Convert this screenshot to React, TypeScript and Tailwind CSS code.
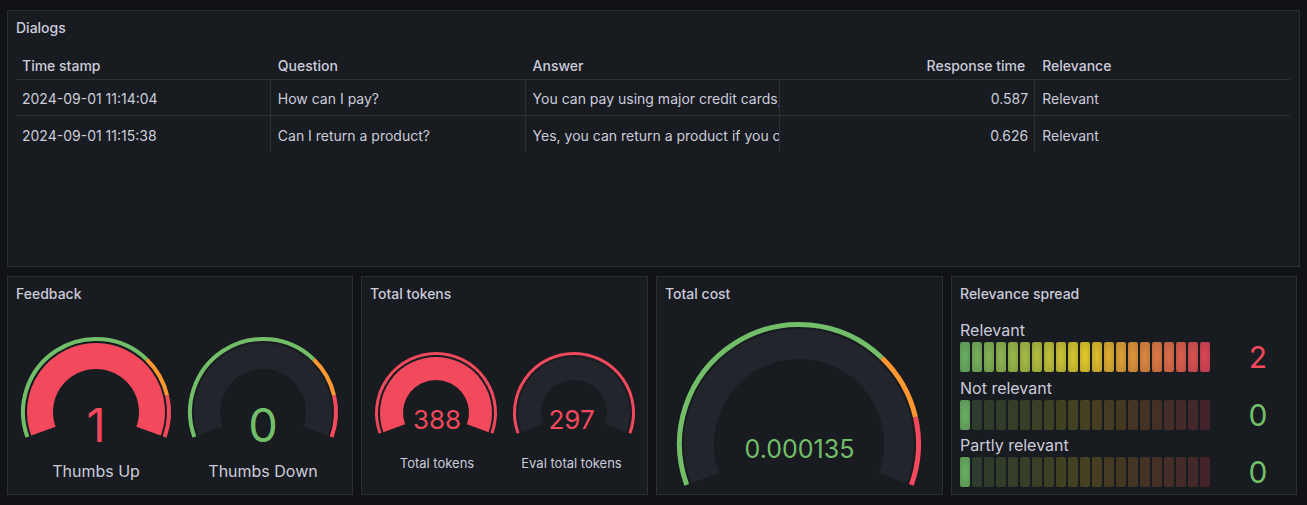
import React from 'react';

const GREEN = '#73bf69';
const ORANGE = '#ff9830';
const RED = '#f2495c';
const TRACK = '#22252b';

type Band = [number, number, string];

// thresholds as fractions of the gauge range
const trafficBands: Band[] = [
  [0, 0.7, GREEN],
  [0.7, 0.85, ORANGE],
  [0.85, 1, RED],
];
const redBands: Band[] = [[0, 1, RED]];

const START = 160;
const SWEEP = 220;

function arc(cx: number, cy: number, r: number, f0: number, f1: number) {
  const a0 = ((START + SWEEP * f0) * Math.PI) / 180;
  const a1 = ((START + SWEEP * f1) * Math.PI) / 180;
  const x0 = cx + r * Math.cos(a0);
  const y0 = cy + r * Math.sin(a0);
  const x1 = cx + r * Math.cos(a1);
  const y1 = cy + r * Math.sin(a1);
  const large = SWEEP * (f1 - f0) > 180 ? 1 : 0;
  return `M ${x0} ${y0} A ${r} ${r} 0 ${large} 1 ${x1} ${y1}`;
}

type GaugeProps = {
  box: string;
  width: number;
  height: number;
  cx: number;
  cy: number;
  r: number;
  band: number;
  gap: number;
  inner: number;
  fill: number;
  color: string;
  bands: Band[];
  value: string;
  valueClass: string;
};

function Gauge(p: GaugeProps) {
  const outer = p.r - p.band - p.gap;
  const mid = (outer + p.inner) / 2;
  const tw = outer - p.inner;
  return (
    <div className={`relative ${p.box}`}>
      <svg width={p.width} height={p.height} className="absolute left-0 top-0">
        {p.bands.map(([f0, f1, c]) => (
          <path key={f0} d={arc(p.cx, p.cy, p.r - p.band / 2, f0, f1)} stroke={c} strokeWidth={p.band} fill="none" />
        ))}
        <path d={arc(p.cx, p.cy, mid, 0, 1)} stroke={TRACK} strokeWidth={tw} fill="none" />
        {p.fill > 0 && (
          <path d={arc(p.cx, p.cy, mid, 0, p.fill)} stroke={p.color} strokeWidth={tw} fill="none" />
        )}
      </svg>
      <div className={`absolute inset-x-0 text-center leading-none ${p.valueClass}`}>{p.value}</div>
    </div>
  );
}

function Panel({ title, className, children }: { title: string; className: string; children?: React.ReactNode }) {
  return (
    <div className={`flex flex-col border border-[#2a2d32] bg-[#181b1f] ${className}`}>
      <div className="h-[32px] shrink-0 px-[8px] pt-[7px] text-[14px] font-medium leading-[20px] text-[#ccccdc]">
        {title}
      </div>
      {children}
    </div>
  );
}

const rows = [
  ['2024-09-01 11:14:04', 'How can I pay?', 'You can pay using major credit cards, debit cards and PayPal.', '0.587', 'Relevant'],
  ['2024-09-01 11:15:38', 'Can I return a product?', 'Yes, you can return a product if you contact us within 30 days.', '0.626', 'Relevant'],
];

function DialogsTable() {
  return (
    <div className="ml-[8px] mr-[9px] text-[14px] text-[#ccccdc]">
      <div className="grid h-[37px] grid-cols-5 border-b border-[#2c2f34] font-medium">
        <div className="pl-[6px] pt-[13px] leading-[20px]">Time stamp</div>
        <div className="pl-[7px] pt-[13px] leading-[20px]">Question</div>
        <div className="pl-[7px] pt-[13px] leading-[20px]">Answer</div>
        <div className="pr-[10px] pt-[13px] text-right leading-[20px]">Response time</div>
        <div className="pl-[7px] pt-[13px] leading-[20px]">Relevance</div>
      </div>
      {rows.map((r, i) => (
        <div key={r[0]} className={`grid h-[36px] grid-cols-5 ${i === 0 ? 'border-b border-[#2c2f34]' : ''}`}>
          <div className="flex items-center overflow-hidden whitespace-nowrap border-r border-[#2c2f34] pl-[6px] pt-[2px]">{r[0]}</div>
          <div className="flex items-center overflow-hidden whitespace-nowrap border-r border-[#2c2f34] pl-[7px] pt-[2px]">{r[1]}</div>
          <div className="flex items-center overflow-hidden whitespace-nowrap border-r border-[#2c2f34] pl-[7px] pt-[2px]">{r[2]}</div>
          <div className="flex items-center justify-end overflow-hidden whitespace-nowrap border-r border-[#2c2f34] pr-[6px] pt-[2px]">{r[3]}</div>
          <div className="flex items-center overflow-hidden whitespace-nowrap pl-[7px] pt-[2px]">{r[4]}</div>
        </div>
      ))}
    </div>
  );
}

// continuous green-yellow-red scheme
function grYlRd(t: number): number[] {
  const g = [115, 191, 105];
  const y = [250, 222, 42];
  const r = [242, 73, 92];
  const [a, b, k] = t < 0.5 ? [g, y, t * 2] : [y, r, (t - 0.5) * 2];
  return a.map((v, i) => Math.round(v + (b[i] - v) * k));
}

function LcdRow({ label, value, lit, valueClass }: { label: string; value: string; lit: number; valueClass: string }) {
  const cells = Array.from({ length: 21 }, (_, i) => i);
  return (
    <div className="flex items-end">
      <div className="w-[250px]">
        <div className="text-[16px] leading-[20px] text-[#ccccdc]">{label}</div>
        <div className="mt-[2px] flex h-[30px] gap-[2px]">
          {cells.map((i) => {
            const [r, g, b] = grYlRd(i / 20);
            const bg =
              i < lit
                ? `radial-gradient(ellipse at center, rgba(${r},${g},${b},0.9), rgba(${r},${g},${b},0.72))`
                : `rgba(${r},${g},${b},0.2)`;
            return <div key={i} className="h-full w-[10px] rounded-[2px]" style={{ background: bg }} />;
          })}
        </div>
      </div>
      <div className={`flex h-[30px] flex-1 items-center justify-center pl-[18px] text-[30px] leading-none ${valueClass}`}>
        {value}
      </div>
    </div>
  );
}

export default function App() {
  return (
    <div className="h-[505px] w-[1307px] overflow-hidden bg-[#111217] px-[7px] pt-[10px] font-[Inter,sans-serif]">
      <Panel title="Dialogs" className="h-[257px]">
        <DialogsTable />
      </Panel>

      <div className="mt-[9px] flex h-[219px] gap-[8px]">
        <Panel title="Feedback" className="w-[346px]">
          <div className="flex gap-[3px] px-[6px]">
            <div className="flex w-[164px] flex-col items-center">
              <Gauge
                box="w-[164px] h-[132px]"
                width={164}
                height={132}
                cx={82}
                cy={103}
                r={75}
                band={4}
                gap={2}
                inner={43}
                fill={1}
                color={RED}
                bands={trafficBands}
                value="1"
                valueClass="top-[92px] text-[47px] text-[#f2495c]"
              />
              <div className="mt-[20px] text-[16px] leading-[20px] text-[#ccccdc]">Thumbs Up</div>
            </div>
            <div className="flex w-[164px] flex-col items-center">
              <Gauge
                box="w-[164px] h-[132px]"
                width={164}
                height={132}
                cx={82}
                cy={103}
                r={75}
                band={4}
                gap={2}
                inner={43}
                fill={0}
                color={GREEN}
                bands={trafficBands}
                value="0"
                valueClass="top-[92px] text-[47px] text-[#73bf69]"
              />
              <div className="mt-[20px] text-[16px] leading-[20px] text-[#ccccdc]">Thumbs Down</div>
            </div>
          </div>
        </Panel>

        <Panel title="Total tokens" className="w-[287px]">
          <div className="flex px-[8px]">
            <div className="flex w-[134px] flex-col items-center">
              <Gauge
                box="w-[134px] h-[126px]"
                width={134}
                height={126}
                cx={66}
                cy={104}
                r={61}
                band={3}
                gap={2}
                inner={33}
                fill={1}
                color={RED}
                bands={redBands}
                value="388"
                valueClass="top-[98px] text-[26px] text-[#f2495c]"
              />
              <div className="mt-[19px] text-[13px] leading-[18px] text-[#ccccdc]">Total tokens</div>
            </div>
            <div className="flex w-[135px] flex-col items-center">
              <Gauge
                box="w-[135px] h-[126px]"
                width={135}
                height={126}
                cx={70}
                cy={104}
                r={61}
                band={3}
                gap={2}
                inner={33}
                fill={0}
                color={RED}
                bands={redBands}
                value="297"
                valueClass="top-[98px] text-[26px] text-[#f2495c]"
              />
              <div className="mt-[19px] text-[13px] leading-[18px] text-[#ccccdc]">Eval total tokens</div>
            </div>
          </div>
        </Panel>

        <Panel title="Total cost" className="w-[287px]">
          <div className="px-[8px]">
            <Gauge
              box="w-[269px] h-[185px]"
              width={269}
              height={185}
              cx={134}
              cy={135}
              r={122}
              band={5}
              gap={2}
              inner={85}
              fill={0}
              color={GREEN}
              bands={trafficBands}
              value="0.000135"
              valueClass="top-[128px] text-[25px] text-[#73bf69]"
            />
          </div>
        </Panel>

        <Panel title="Relevance spread" className="w-[346px]">
          <div className="flex flex-col gap-[5.5px] px-[8px] pt-[11px]">
            <LcdRow label="Relevant" value="2" lit={21} valueClass="text-[#f2495c]" />
            <LcdRow label="Not relevant" value="0" lit={1} valueClass="text-[#73bf69]" />
            <LcdRow label="Partly relevant" value="0" lit={1} valueClass="text-[#73bf69]" />
          </div>
        </Panel>
      </div>
    </div>
  );
}
